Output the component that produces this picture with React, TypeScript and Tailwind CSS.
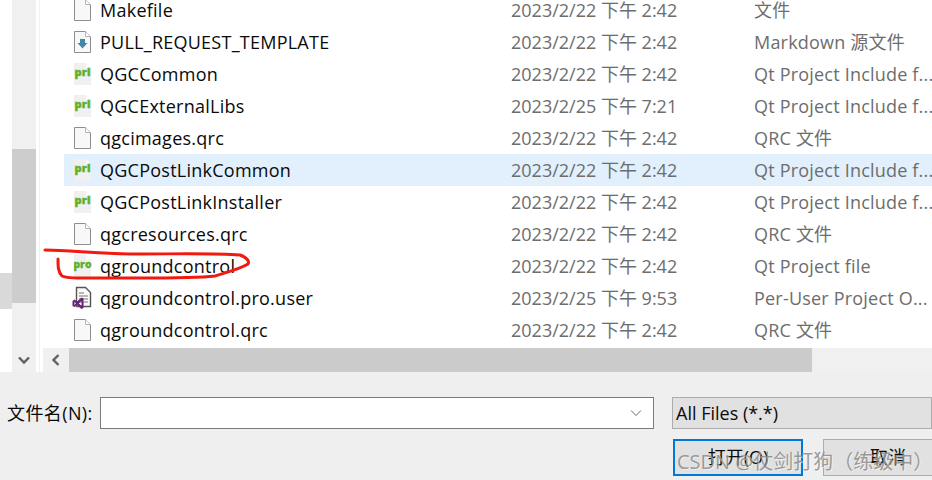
const FONT = "font-['Open_Sans','Noto_Sans_CJK_SC',sans-serif]";

const FileIcon = () => (
  <svg width="20" height="24" viewBox="0 0 20 24" className="shrink-0">
    <path d="M2.5 1.5H13.5L18.5 6.5V22.5H2.5Z" fill="#f7f8f9" stroke="#8e8e8e" />
    <path d="M13.5 1.5V6.5H18.5" fill="#fff" stroke="#b4b4b4" />
  </svg>
);

const MarkdownIcon = () => (
  <svg width="20" height="24" viewBox="0 0 20 24" className="shrink-0">
    <path d="M2.5 1.5H13.5L18.5 6.5V22.5H2.5Z" fill="#f7f8f9" stroke="#8e8e8e" />
    <path d="M13.5 1.5V6.5H18.5" fill="#fff" stroke="#b4b4b4" />
    <path d="M8 9H13V13H15.5L10.5 18.5L5.5 13H8Z" fill="#3f88a8" />
  </svg>
);

const QtIcon = ({ label }: { label: string }) => (
  <svg width="20" height="24" viewBox="0 0 20 24" className="shrink-0">
    <path d="M2 1H14L19 6V23H2Z" fill="#f0f0f0" />
    <path d="M14 1V6H19" fill="#fbfbfb" />
    <text
      x={label === "pro" ? 1.5 : 2.5}
      y="14.3"
      textLength={label === "pro" ? 18 : 16}
      lengthAdjust="spacingAndGlyphs"
      fontSize="10.5"
      fontWeight="800"
      fill="#5cb02c"
      stroke="#5cb02c"
      strokeWidth="0.3"
      fontFamily="'Open Sans', sans-serif"
    >
      {label}
    </text>
  </svg>
);

const VsIcon = () => (
  <svg width="20" height="24" viewBox="0 0 20 24" className="shrink-0">
    <path d="M4.5 1.5H13.5L18.5 6.5V20.5H4.5Z" fill="#fafafa" stroke="#555" strokeWidth="1.4" />
    <path d="M7 7H12M7 10H16M7 13H16M7 16H16" stroke="#777" />
    <path
      d="M0.5 15L2.5 13.5L5 15.5L9.5 11.5L11.5 12.5V22L9.5 23L5 19L2.5 21L0.5 20ZM2.5 15.8V19L4 17.4ZM9.5 15L6.8 17.4L9.5 19.8Z"
      fill="#68217a"
      fillRule="evenodd"
    />
  </svg>
);

const rows = [
  { icon: <FileIcon />, name: "Makefile", date: "2023/2/22 下午 2:42", type: "文件" },
  { icon: <MarkdownIcon />, name: "PULL_REQUEST_TEMPLATE", date: "2023/2/22 下午 2:42", type: "Markdown 源文件" },
  { icon: <QtIcon label="prl" />, name: "QGCCommon", date: "2023/2/22 下午 2:42", type: "Qt Project Include f..." },
  { icon: <QtIcon label="prl" />, name: "QGCExternalLibs", date: "2023/2/25 下午 7:21", type: "Qt Project Include f..." },
  { icon: <FileIcon />, name: "qgcimages.qrc", date: "2023/2/22 下午 2:42", type: "QRC 文件" },
  { icon: <QtIcon label="prl" />, name: "QGCPostLinkCommon", date: "2023/2/22 下午 2:42", type: "Qt Project Include f...", selected: true },
  { icon: <QtIcon label="prl" />, name: "QGCPostLinkInstaller", date: "2023/2/22 下午 2:42", type: "Qt Project Include f..." },
  { icon: <FileIcon />, name: "qgcresources.qrc", date: "2023/2/22 下午 2:42", type: "QRC 文件" },
  { icon: <QtIcon label="pro" />, name: "qgroundcontrol", date: "2023/2/22 下午 2:42", type: "Qt Project file" },
  { icon: <VsIcon />, name: "qgroundcontrol.pro.user", date: "2023/2/25 下午 9:53", type: "Per-User Project O..." },
  { icon: <FileIcon />, name: "qgroundcontrol.qrc", date: "2023/2/22 下午 2:42", type: "QRC 文件" },
];

const Chevron = ({ d }: { d: string }) => (
  <svg width="12" height="12" viewBox="0 0 12 12">
    <path d={d} fill="none" stroke="#606060" strokeWidth="2.4" />
  </svg>
);

export default function App() {
  return (
    <div className={`relative flex h-[480px] w-[932px] flex-col overflow-hidden bg-[#f0f0f0] text-[18px] ${FONT}`}>
      <div className="flex h-[372px] bg-white">
        {/* left pane scrollbar */}
        <div className="flex w-[64px] shrink-0">
          <div className="w-3 shrink-0">
            <div className="mt-[273px] h-9 bg-[#d9d9d9]" />
          </div>
          <div className="flex w-6 shrink-0 flex-col bg-[#f0f0f0]">
            <div className="mt-[149px] h-[154px] bg-[#cdcdcd]" />
            <div className="mt-auto flex h-6 items-center justify-center">
              <Chevron d="M1 3.5L6 8.5L11 3.5" />
            </div>
          </div>
          <div className="ml-[3px] w-px bg-[#f0f0f0]" />
        </div>

        {/* file list */}
        <div className="flex min-w-0 flex-1 flex-col">
          <div className="-mt-[6px] h-[354px] overflow-visible">
            {rows.map((row) => (
              <div
                key={row.name}
                className={`flex h-8 items-center ${row.selected ? "bg-[#e1f0fc]" : ""}`}
              >
                <div className="ml-2 flex w-7 shrink-0">{row.icon}</div>
                <div className="w-[411px] shrink-0 tracking-[0.25px] text-[#0a0a0a]">{row.name}</div>
                <div className="w-[243px] shrink-0 text-[#6d6d6d]">{row.date}</div>
                <div className="whitespace-nowrap tracking-[0.2px] text-[#6d6d6d]">{row.type}</div>
              </div>
            ))}
          </div>
          {/* horizontal scrollbar */}
          <div className="-ml-[21px] flex h-6 bg-[#f0f0f0]">
            <div className="flex w-[26px] items-center justify-center">
              <Chevron d="M8.5 1L3.5 6L8.5 11" />
            </div>
            <div className="w-[743px] bg-[#cbcbcb]" />
          </div>
        </div>
      </div>

      {/* bottom form */}
      <div className="flex flex-1 flex-col bg-[#efefef] pl-[7px]">
        <div className="mt-[25px] flex h-8 items-center">
          <span className="w-[93px] shrink-0 tracking-[0.4px] text-[#0a0a0a]">文件名(N):</span>
          <div className="flex h-8 w-[554px] shrink-0 items-center justify-end border border-[#7a7a7a] bg-white pr-[11px]">
            <svg width="12" height="8" viewBox="0 0 12 8">
              <path d="M1 1.5L6 6.5L11 1.5" fill="none" stroke="#666" />
            </svg>
          </div>
          <div className="ml-[18px] flex h-8 flex-1 items-center border border-[#adadad] bg-[#e1e1e1] pl-[3px] text-[#0a0a0a]">
            All Files (*.*)
          </div>
        </div>
        <div className="mt-[10px] ml-[666px] flex gap-5">
          <button className="h-[37px] w-[130px] shrink-0 border-2 border-[#0078d7] bg-[#e1e1e1] text-[#0a0a0a]">
            打开(O)
          </button>
          <button className="h-[37px] w-[130px] shrink-0 border border-[#adadad] bg-[#e1e1e1] text-[#0a0a0a]">
            取消
          </button>
        </div>
      </div>

      {/* red annotation */}
      <svg className="absolute top-0 left-0" width="932" height="480" viewBox="0 0 932 480" fill="none">
        <path
          d="M45 250C70 250 100 254 140 254C175 254 215 253 240 255C246 257 250 261 248 264C240 269 228 272 215 276C190 279 130 278 100 278C85 278 68 279 62 276C58 272 58 266 58 259"
          stroke="#f2190e"
          strokeWidth="3"
          strokeLinecap="round"
          strokeLinejoin="round"
        />
      </svg>

      {/* watermark */}
      <div className="absolute top-[447px] left-[677px] whitespace-nowrap text-[20px] text-[#8c8c8c]/85 [text-shadow:1px_1px_0_rgba(255,255,255,0.45)]">
        CSDN @仗剑打狗（练级中）
      </div>
    </div>
  );
}
